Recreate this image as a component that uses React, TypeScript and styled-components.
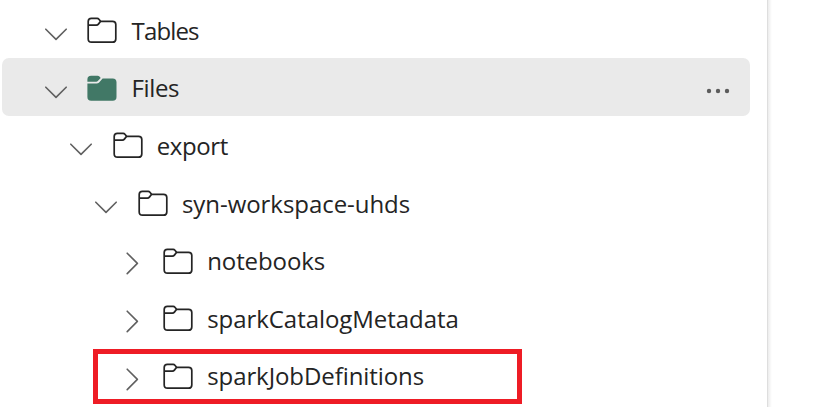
import React from "react";
import styled, { createGlobalStyle } from "styled-components";

const GlobalStyle = createGlobalStyle`
  * { box-sizing: border-box; }
  body { margin: 0; background: #fff; overflow: hidden; }
`;

const Page = styled.div`
  display: flex;
  width: 819px;
  height: 407px;
  overflow: hidden;
  background: #fff;
  color: #242424;
  font-family: "Open Sans", "Noto Sans", sans-serif;
`;

const Explorer = styled.div`
  position: relative;
  width: 767px;
  flex: none;
  padding-left: 2px;
`;

const Divider = styled.div`
  width: 5px;
  flex: none;
  background: linear-gradient(to right, #dedede 0 1px, #ececec 1px, #f6f6f6 3px, #fff 5px);
`;

const Row = styled.div<{ $level: number; $selected?: boolean }>`
  display: flex;
  align-items: flex-start;
  width: 748px;
  height: 58px;
  margin-bottom: -0.4px;
  padding-left: ${(p) => 42 + p.$level * 25.2}px;
  border-radius: 7px;
  background: ${(p) => (p.$selected ? "#eaeaea" : "transparent")};
`;

const Chevron = styled.svg`
  flex: none;
  width: 24px;
  height: 24px;
  margin-top: 22px;
  fill: none;
  stroke: #606060;
  stroke-width: 1.6;
  stroke-linecap: round;
  stroke-linejoin: round;
`;

const Folder = styled.svg`
  flex: none;
  width: 30px;
  height: 27px;
  margin: 17.2px 0 0 19.4px;
`;

const Label = styled.span<{ $spacing: number }>`
  margin-left: 14.2px;
  font-size: 24px;
  line-height: 34px;
  padding-top: 13.7px;
  letter-spacing: ${(p) => p.$spacing}px;
  white-space: pre;
`;

const More = styled.svg`
  width: 26px;
  height: 8px;
  margin: 29px 19px 0 auto;
  fill: #5c5c5c;
`;

const Highlight = styled.div`
  position: absolute;
  left: 93px;
  top: 349px;
  width: 429px;
  height: 55px;
  border: 5px solid #ee1c25;
`;

type Item = {
  name: string;
  level: number;
  spacing: number;
  open?: boolean;
  selected?: boolean;
};

const items: Item[] = [
  { name: "Tables", level: 0, spacing: -0.85, open: true },
  { name: "Files", level: 0, spacing: -0.4, open: true, selected: true },
  { name: "export", level: 1, spacing: -0.4, open: true },
  { name: "syn-workspace-uhds", level: 2, spacing: -0.05, open: true },
  { name: "notebooks", level: 3, spacing: -0.1 },
  { name: "sparkCatalogMetadata", level: 3, spacing: -0.05 },
  { name: "sparkJobDefinitions", level: 3, spacing: -0.08 },
];

const FolderIcon = ({ filled }: { filled?: boolean }) => (
  <Folder viewBox="0 0 30 27">
    {filled ? (
      <g fill="#417866">
        <path d="M.4 6.8V4.5Q.4 .8 4.1 .8H10.5Q11.8 .8 12.7 1.8L13.7 3L10.8 6.1Q10.2 6.8 9.3 6.8Z" />
        <path d="M.4 8.5H9.6Q11.1 8.5 12.1 7.4L15.6 3.5H25.7Q29.5 3.5 29.5 7.3V22Q29.5 25.8 25.7 25.8H4.2Q.4 25.8 .4 22Z" />
      </g>
    ) : (
      <g fill="none" stroke="#242424" strokeWidth="1.7" strokeLinejoin="round">
        <path d="M1.2 4.5Q1.2 1.3 4.4 1.3H10.2Q11.2 1.3 11.9 2.2L13.6 4.3H25.5Q28.8 4.3 28.8 7.6V21.9Q28.8 25.2 25.5 25.2H4.5Q1.2 25.2 1.2 21.9Z" />
        <path d="M1.2 8.1H9.3Q10.6 8.1 11.4 7.1L13.6 4.3" />
      </g>
    )}
  </Folder>
);

export default function App() {
  return (
    <>
      <GlobalStyle />
      <Page>
        <Explorer>
          {items.map((item) => (
            <Row key={item.name} $level={item.level} $selected={item.selected}>
              <Chevron viewBox="0 0 24 24">
                <path d={item.open ? "M1.8 7.2L12 17.4L22.2 7.2" : "M7.2 1.2L17.4 11.4L7.2 21.6"} />
              </Chevron>
              <FolderIcon filled={item.selected} />
              <Label $spacing={item.spacing}>{item.name}</Label>
              {item.selected && (
                <More viewBox="0 0 26 8">
                  <circle cx="4" cy="4" r="2.2" />
                  <circle cx="13" cy="4" r="2.2" />
                  <circle cx="22" cy="4" r="2.2" />
                </More>
              )}
            </Row>
          ))}
          <Highlight />
        </Explorer>
        <Divider />
      </Page>
    </>
  );
}
